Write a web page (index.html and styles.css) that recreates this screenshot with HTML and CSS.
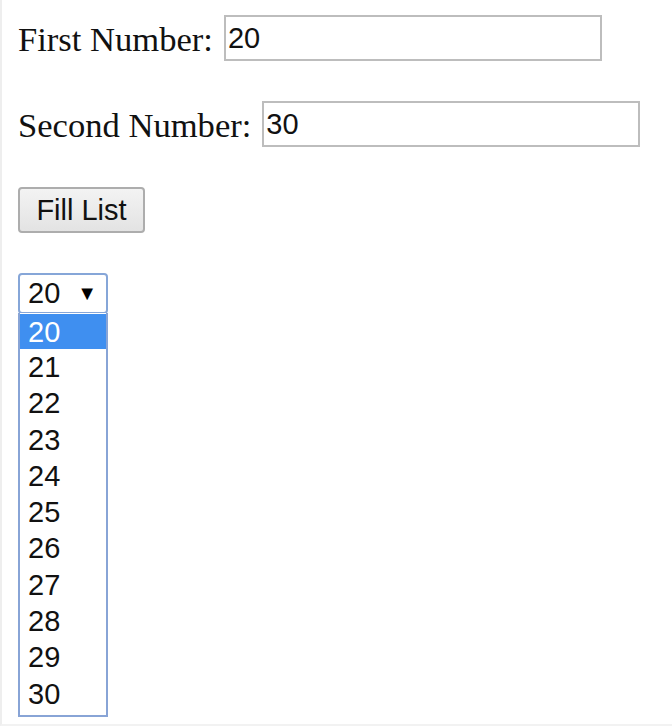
FILE: index.html
```html
<!DOCTYPE html>
<html>
<head>
<meta charset="utf-8">
<link rel="stylesheet" href="styles.css">
</head>
<body>
<div class="page">
  <div class="row">
    <label class="lbl" for="first">First Number:</label>
    <div class="field">20</div>
  </div>
  <div class="row">
    <label class="lbl" for="second">Second Number:</label>
    <div class="field">30</div>
  </div>
  <div class="row">
    <div class="btn">Fill List</div>
  </div>
  <div class="row selrow">
    <div class="sel">
      <span class="selval">20</span>
      <span class="arrow">&#9660;</span>
    </div>
    <ul class="dropdown">
      <li class="opt active">20</li>
      <li class="opt">21</li>
      <li class="opt">22</li>
      <li class="opt">23</li>
      <li class="opt">24</li>
      <li class="opt">25</li>
      <li class="opt">26</li>
      <li class="opt">27</li>
      <li class="opt">28</li>
      <li class="opt">29</li>
      <li class="opt">30</li>
    </ul>
  </div>
</div>
</body>
</html>
```

FILE: styles.css
```css
html, body {
  margin: 0;
  padding: 0;
  background: #ffffff;
}

.page {
  box-sizing: border-box;
  width: 672px;
  height: 726px;
  border-left: 2px solid #eeeeee;
  border-bottom: 2px solid #f2f2f2;
  padding: 15px 0 0 16px;
  display: flex;
  flex-direction: column;
  gap: 40px;
  font-family: "Liberation Serif", "Times New Roman", serif;
  font-size: 34.6px;
  color: #111;
}

.row {
  display: flex;
  align-items: center;
  gap: 11px;
  height: 46px;
}

.lbl {
  line-height: 46px;
  padding-top: 2px;
}

.field {
  box-sizing: border-box;
  width: 378px;
  height: 46px;
  border: 2px solid #bdbdbd;
  padding: 0 2px;
  font-family: "Liberation Sans", Arial, sans-serif;
  font-size: 29px;
  line-height: 42px;
  color: #111;
  background: #fff;
}

.btn {
  box-sizing: border-box;
  width: 127px;
  height: 46px;
  border: 2px solid #adadad;
  border-radius: 4px;
  background: linear-gradient(#f3f3f3, #e3e3e3);
  font-family: "Liberation Sans", Arial, sans-serif;
  font-size: 29px;
  line-height: 42px;
  text-align: center;
  color: #111;
}

.selrow {
  position: relative;
  height: 40px;
  align-items: flex-start;
}

.sel {
  box-sizing: border-box;
  width: 90px;
  height: 41px;
  border: 2px solid #86a6d8;
  border-radius: 4px;
  display: flex;
  align-items: center;
  justify-content: space-between;
  padding: 0 9px 0 8px;
  font-family: "Liberation Sans", Arial, sans-serif;
  font-size: 29px;
  color: #111;
  background: #fff;
}

.arrow {
  font-size: 20px;
  color: #000;
}

.dropdown {
  position: absolute;
  left: 0;
  top: 40px;
  box-sizing: border-box;
  width: 90px;
  margin: 0;
  padding: 1px 0 3px;
  list-style: none;
  border: 2px solid #88a4d6;
  border-top: 0;
  background: #fff;
  font-family: "Liberation Sans", Arial, sans-serif;
  font-size: 29px;
  color: #111;
}

.opt {
  height: 36.3px;
  line-height: 36px;
  padding-left: 8px;
}

.opt.active {
  background: #3f8ff0;
  color: #fff;
  height: 35px;
}
```
